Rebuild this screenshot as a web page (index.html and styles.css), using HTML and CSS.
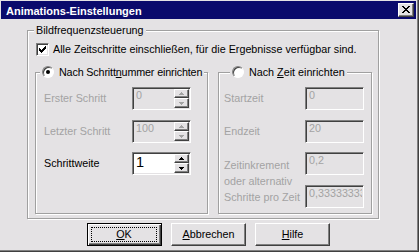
FILE: index.html
```html
<!DOCTYPE html>
<html lang="de">
<head>
<meta charset="utf-8">
<title>Animations-Einstellungen</title>
<link rel="stylesheet" href="styles.css">
</head>
<body>
<div class="window">
  <div class="titlebar">
    <span class="title">Animations-Einstellungen</span>
    <span class="close"><svg width="8" height="7" viewBox="0 0 8 7" shape-rendering="crispEdges"><path fill="#000" d="M0 0h2v1H0zM6 0h2v1H6zM1 1h2v1H1zM5 1h2v1H5zM2 2h4v1H2zM3 3h2v1H3zM2 4h4v1H2zM1 5h2v1H1zM5 5h2v1H5zM0 6h2v1H0zM6 6h2v1H6z"/></svg></span>
  </div>
  <div class="client">
    <fieldset class="group outer">
      <legend class="legend">Bildfrequenzsteuerung</legend>
      <div class="outer-body">
        <div class="check">
          <span class="checkbox"><svg width="7" height="7" viewBox="0 0 7 7" shape-rendering="crispEdges"><path fill="#000" d="M6 0h1v1H6zM5 1h2v1H5zM0 2h1v1H0zM4 2h3v1H4zM0 3h2v1H0zM3 3h3v1H3zM0 4h5v1H0zM1 5h3v1H1zM2 6h1v1H2z"/></svg></span>
          <span class="check-text">Alle Zeitschritte einschließen, für die Ergebnisse verfügbar sind.</span>
        </div>
        <div class="subgroups">
          <fieldset class="group sub sub-left">
            <legend class="legend legend-radio legend-left"><span class="radio"><span class="dot"></span></span><span class="tight">Nach Schritt<u>n</u>ummer einrichten</span></legend>
            <div class="form form-left">
              <span class="lbl off">Erster Schritt</span>
              <div class="edit off">
                <span class="val">0</span>
                <span class="spin">
                  <span class="sb"><svg width="5" height="3" viewBox="0 0 5 3" shape-rendering="crispEdges"><path fill="#a3a3a3" d="M2 0h1v1H2zM1 1h3v1H1zM0 2h5v1H0z"/></svg></span>
                  <span class="sb"><svg width="5" height="3" viewBox="0 0 5 3" shape-rendering="crispEdges"><path fill="#a3a3a3" d="M0 0h5v1H0zM1 1h3v1H1zM2 2h1v1H2z"/></svg></span>
                </span>
              </div>
              <span class="lbl off">Letzter Schritt</span>
              <div class="edit off">
                <span class="val">100</span>
                <span class="spin">
                  <span class="sb"><svg width="5" height="3" viewBox="0 0 5 3" shape-rendering="crispEdges"><path fill="#a3a3a3" d="M2 0h1v1H2zM1 1h3v1H1zM0 2h5v1H0z"/></svg></span>
                  <span class="sb"><svg width="5" height="3" viewBox="0 0 5 3" shape-rendering="crispEdges"><path fill="#a3a3a3" d="M0 0h5v1H0zM1 1h3v1H1zM2 2h1v1H2z"/></svg></span>
                </span>
              </div>
              <span class="lbl">Schrittweite</span>
              <div class="edit on">
                <span class="val big">1</span>
                <span class="spin">
                  <span class="sb"><svg width="5" height="3" viewBox="0 0 5 3" shape-rendering="crispEdges"><path fill="#000" d="M2 0h1v1H2zM1 1h3v1H1zM0 2h5v1H0z"/></svg></span>
                  <span class="sb"><svg width="5" height="3" viewBox="0 0 5 3" shape-rendering="crispEdges"><path fill="#000" d="M0 0h5v1H0zM1 1h3v1H1zM2 2h1v1H2z"/></svg></span>
                </span>
              </div>
            </div>
          </fieldset>
          <fieldset class="group sub sub-right">
            <legend class="legend legend-radio legend-right"><span class="radio"></span>Nach <u>Z</u>eit einrichten</legend>
            <div class="form form-right">
              <span class="lbl off">Startzeit</span>
              <div class="edit off"><span class="val">0</span></div>
              <span class="lbl off">Endzeit</span>
              <div class="edit off"><span class="val">20</span></div>
              <span class="lbl off multi">Zeitinkrement<br>oder alternativ<br>Schritte pro Zeit</span>
              <div class="edit off"><span class="val">0,2</span></div>
              <div class="edit off row4"><span class="val">0,33333333</span></div>
            </div>
          </fieldset>
        </div>
      </div>
    </fieldset>
    <div class="buttons">
      <button class="btn default"><span class="focus"><u>O</u>K</span></button>
      <button class="btn"><u>A</u>bbrechen</button>
      <button class="btn"><u>H</u>ilfe</button>
    </div>
  </div>
</div>
</body>
</html>
```
FILE: styles.css
```css
* { box-sizing: border-box; }
html, body { margin: 0; padding: 0; }
body {
  width: 419px;
  height: 252px;
  overflow: hidden;
  background: #e4e2e4;
  font-family: "Liberation Sans", Arial, sans-serif;
  font-size: 10.75px;
  color: #000;
}
.window {
  width: 419px;
  height: 252px;
  padding: 1px 3px 3px 1px;
  background: #e4e2e4;
  box-shadow: inset -1px -1px 0 #404040, inset -2px -2px 0 #808080;
  display: flex;
  flex-direction: column;
}
.titlebar {
  height: 18px;
  flex: none;
  background: #0a0a6c;
  display: flex;
  align-items: center;
  justify-content: space-between;
  padding: 0 2px 0 5px;
}
.title {
  color: #fff;
  font-weight: bold;
  font-size: 11px;
  line-height: 18px;
  padding-top: 2px;
}
.close {
  width: 16px;
  height: 14px;
  background: #e4e2e4;
  border: 1px solid;
  border-color: #fff #404040 #404040 #fff;
  box-shadow: inset -1px -1px 0 #808080;
  display: flex;
  align-items: center;
  justify-content: center;
  padding: 0 1px 1px 0;
}
.close svg { display: block; }
.client {
  flex: 1;
  display: flex;
  flex-direction: column;
}
.group {
  margin: 0;
  padding: 0;
  min-width: 0;
  border: 1px solid #a0a0a0;
  box-shadow: inset 1px 1px 0 #fff, 1px 1px 0 #fff;
}
.legend {
  padding: 0 2px;
  line-height: 13px;
  height: 13px;
  background: #e4e2e4;
  white-space: nowrap;
}
.outer {
  margin: 5px 0 0 26px;
  width: 352px;
}
.outer > .legend { margin-left: 6px; }
.outer-body {
  padding: 6px 0 4px 7px;
}
.check {
  display: flex;
  align-items: center;
  height: 13px;
  margin-left: 1px;
}
.checkbox {
  width: 13px;
  height: 13px;
  flex: none;
  border: 1px solid;
  border-color: #808080 #fff #fff #808080;
  box-shadow: inset 1px 1px 0 #404040, inset -1px -1px 0 #e4e2e4;
  background: #fff;
  display: flex;
  align-items: center;
  justify-content: center;
  margin-right: 4px;
}
.checkbox svg { display: block; }
.check-text { line-height: 13px; white-space: nowrap; }
.subgroups {
  display: flex;
  gap: 10px;
  margin-top: 10px;
}
.sub-left { width: 173px; }
.sub-right { width: 154px; }
.legend-radio { display: block; }
.legend-left { margin-left: 4px; }
.legend-right { margin-left: 11px; }
.tight { letter-spacing: -0.15px; }
.radio {
  display: inline-flex;
  vertical-align: top;
  width: 12px;
  height: 12px;
  border-radius: 50%;
  border: 1px solid;
  border-color: #808080 #fff #fff #808080;
  box-shadow: inset 1px 1px 0 #404040;
  background: #fff;
  margin-right: 5px;
  align-items: center;
  justify-content: center;
}
.dot {
  width: 4px;
  height: 4px;
  border-radius: 50%;
  background: #000;
}
.form {
  height: 134px;
  display: grid;
  grid-template-rows: 33px 32px 33px 23px;
  align-items: start;
  padding-top: 8px;
}
.form-left {
  grid-template-columns: 88px 59px;
  padding-left: 8px;
}
.form-right {
  grid-template-columns: 81px 59px;
  padding-left: 5px;
}
.lbl {
  line-height: 23px;
  white-space: nowrap;
}
.lbl.multi {
  grid-row: 3 / span 2;
  line-height: 16px;
  padding-top: 5px;
}
.off { color: #a3a3a3; }
.row4 { grid-column: 2; grid-row: 4; }
.edit {
  height: 23px;
  border: 1px solid;
  border-color: #808080 #fff #fff #808080;
  box-shadow: inset 1px 1px 0 #404040, inset -1px -1px 0 #e4e2e4;
  padding: 1px 1px 1px 3px;
  display: flex;
  overflow: hidden;
}
.edit.off { background: #e4e2e4; }
.edit.on { background: #fff; }
.val {
  flex: 1;
  min-width: 0;
  overflow: hidden;
  white-space: nowrap;
  line-height: 13px;
}
.val.big {
  font-size: 14.5px;
  line-height: 17px;
}
.spin {
  width: 15px;
  flex: none;
  display: flex;
  flex-direction: column;
}
.sb {
  flex: 1;
  background: #e4e2e4;
  border: 1px solid;
  border-color: #fff #404040 #404040 #fff;
  box-shadow: inset -1px -1px 0 #808080;
  display: flex;
  align-items: center;
  justify-content: center;
}
.sb:first-child { flex: 9 9 0; }
.sb:last-child { flex: 10 10 0; }
.sb svg { display: block; }
.buttons {
  display: flex;
  justify-content: center;
  gap: 9px;
  margin-top: 4px;
}
.btn {
  width: 75px;
  height: 23px;
  margin: 0;
  padding: 0;
  font: inherit;
  color: #000;
  background: #e4e2e4;
  border: 1px solid;
  border-color: #fff #404040 #404040 #fff;
  box-shadow: inset -1px -1px 0 #808080;
  display: flex;
  align-items: center;
  justify-content: center;
  line-height: 13px;
}
.btn.default {
  border-color: #000;
  box-shadow: inset 1px 1px 0 #fff, inset -1px -1px 0 #404040, inset -2px -2px 0 #808080;
  padding: 3px 4px 3px 3px;
}
.focus {
  width: 100%;
  height: 100%;
  border: 1px dotted #000;
  display: flex;
  align-items: center;
  justify-content: center;
}
```
